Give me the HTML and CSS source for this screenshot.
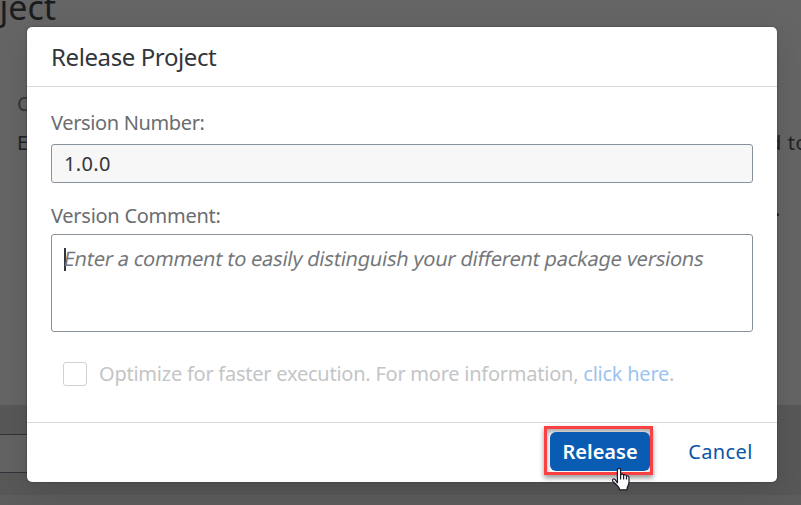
FILE: index.html
```html
<!DOCTYPE html>
<html lang="en">
<head>
<meta charset="utf-8">
<title>Release Project</title>
<link rel="stylesheet" href="styles.css">
</head>
<body>
<div class="page">
  <div class="page-title">ject</div>
  <div class="page-row row-first"><span>C</span></div>
  <div class="page-row row-second"><span>E</span><span class="row-end">d to</span></div>
  <div class="page-row row-third"><span class="row-dot">.</span></div>
  <div class="page-toolbar"><div class="page-field"></div></div>
</div>
<div class="dialog" role="dialog">
  <header class="dialog-header"><span class="title">Release Project</span></header>
  <main class="dialog-body">
    <div class="label"><span class="label-number">Version Number:</span></div>
    <div class="input"><span class="value">1.0.0</span></div>
    <div class="label label-second"><span class="label-comment">Version Comment:</span></div>
    <div class="textarea"><span class="caret"></span><span class="placeholder">Enter a comment to easily distinguish your different package versions</span></div>
    <div class="option"><span class="checkbox"></span><span class="option-text">Optimize for faster execution. For more information, <a class="link">click here</a>.</span></div>
  </main>
  <footer class="dialog-footer">
    <div class="highlight"><button class="release">Release</button></div>
    <button class="cancel">Cancel</button>
  </footer>
</div>
<svg class="cursor" width="20" height="25" viewBox="0 0 20 25">
  <path d="M6.4 15.8V3.2C6.4 .7 9.6 .7 9.6 3.2V8C10.3 6.6 12.3 6.8 12.6 8.4C13.3 7.2 15.3 7.6 15.5 9.2C16.4 8.5 18 9 18 10.8V15.2C18 17.8 16.4 19.1 16.1 21.2V22.8H8.3V21.2C7.2 19.2 4.5 16.8 2.1 14.6C.5 13 2.2 11.2 4 12.4Z" fill="#fff" stroke="#181b2b" stroke-width="1.2" stroke-linejoin="round"/>
  <path d="M9.6 7.5V12.5M12.6 8.3V12.5M15.5 9.2V12.5" fill="none" stroke="#181b2b" stroke-width="1.2"/>
</svg>
</body>
</html>
```
FILE: styles.css
```css
* { box-sizing: border-box; }
body {
  margin: 0;
  width: 801px;
  height: 505px;
  overflow: hidden;
  position: relative;
  font-family: "Noto Sans", sans-serif;
  font-size: 20px;
  line-height: 28px;
  color: #32363a;
}
.page {
  height: 505px;
  overflow: hidden;
  background: linear-gradient(#656565 0 495px, #5d5d5d 495px);
  color: #202224;
  display: flex;
  flex-direction: column;
}
.page-title { font-size: 34px; line-height: 46px; margin-top: -16px; height: 46px; width: 56px; display: flex; justify-content: flex-end; color: #1b1c1e; }
.page-row { height: 28px; display: flex; justify-content: space-between; padding-left: 17px; flex: none; }
.row-first { margin-top: 60px; color: #343638; }
.row-second { margin-top: 11px; }
.row-third { margin-top: 38px; }
.row-end { width: 32px; white-space: nowrap; letter-spacing: .6px; }
.row-dot { margin-left: 758px; }
.page-toolbar { margin-top: 182px; height: 90px; padding-top: 29px; background: #585858; flex: none; }
.page-field { width: 60px; height: 39px; background: #636363; border: solid #30343a; border-width: 1px 0; }

.dialog {
  position: absolute;
  left: 27px;
  top: 27px;
  width: 750px;
  height: 455px;
  display: flex;
  flex-direction: column;
  background: #fff;
  border-radius: 5px;
  box-shadow: 0 0 2px rgba(0, 0, 0, .45), 0 10px 32px rgba(0, 0, 0, .13);
}
.dialog-header { height: 60px; padding: 0 24px; display: flex; align-items: center; border-bottom: 1px solid #d9d9d9; font-size: 24px; letter-spacing: -.4px; }
.dialog-body { flex: 1; padding: 22px 24px 0; }
.label { height: 28px; color: #6a6d70; }
.label-number { letter-spacing: -.36px; }
.label-comment { letter-spacing: -.27px; }
.label-second { margin-top: 19px; }
.input { margin-top: 7px; height: 39px; padding: 0 12px; display: flex; align-items: center; border: 1px solid #89919a; border-radius: 3px; background: #f7f7f7; letter-spacing: .35px; }
.textarea { margin-top: 4px; height: 98px; padding: 10px 12px; display: flex; border: 1px solid #89919a; border-radius: 3px; color: #74777a; white-space: nowrap; }
.caret { width: 2px; height: 23px; margin: 3px -2px 0 0; background: #32363a; flex: none; }
.placeholder { height: 28px; letter-spacing: -.22px; transform: skewX(-11deg); }
.option { margin-top: 28px; padding-left: 12px; display: flex; align-items: center; gap: 12px; color: #c3c5c6; white-space: nowrap; letter-spacing: -.24px; }
.checkbox { width: 24px; height: 24px; border: 1px solid #cfd1d8; border-radius: 3px; flex: none; }
.link { color: #9dc4ef; }
.dialog-footer { height: 60px; padding: 3px 24px 0 0; display: flex; justify-content: flex-end; border-top: 1px solid #d9d9d9; }
.highlight { width: 109px; height: 49px; padding: 3px; border: 3px solid #f94144; box-shadow: 0 3px 5px rgba(0, 0, 0, .4), inset 0 3px 5px rgba(0, 0, 0, .35); }
button { border: 0; padding: 0; margin: 0; font: inherit; background: none; white-space: nowrap; }
.release { width: 100px; height: 39px; border-radius: 6px; background: #0a5cb2; color: #fff; font-weight: 600; }
.cancel { margin-left: 35px; width: 65px; height: 51px; color: #0b55a5; letter-spacing: .4px; }
.cursor { position: absolute; left: 611px; top: 467px; }
```
